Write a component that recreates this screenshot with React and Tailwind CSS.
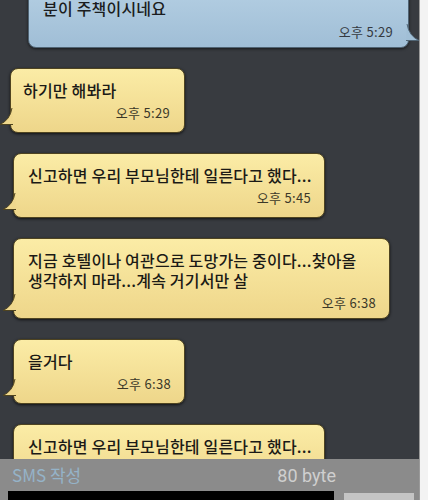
import React from "react";

const FONT = { fontFamily: '"Noto Sans CJK KR", "Noto Sans", sans-serif' };

function Tail({ side = "left", color = "#efd88d", stroke = "#4f4420" }) {
  if (side === "right") {
    return (
      <svg className="absolute -right-[11px] bottom-[5px]" width="13" height="18" viewBox="0 0 13 18">
        <path d="M1 0 Q 3 12 13 16.5 L 0 16.5 Z" fill={color} />
        <path d="M1 0 Q 3 12 13 16.5 L 0 16.5" fill="none" stroke={stroke} strokeWidth="1" />
      </svg>
    );
  }
  return (
    <svg className="absolute -left-[11px] bottom-[6px]" width="13" height="18" viewBox="0 0 13 18">
      <path d="M12 0 Q 10 12 0 16.5 L 13 16.5 Z" fill={color} />
      <path d="M12 0 Q 10 12 0 16.5 L 13 16.5" fill="none" stroke={stroke} strokeWidth="1" />
    </svg>
  );
}

function Bubble({ lines, time, width, left = "ml-[13px]", pl = "pl-[14px]", pr = "pr-[13px]", pb = "pb-[11px]" }) {
  return (
    <div
      className={`relative shrink-0 ${left} rounded-[8px] border border-[#4f4420] bg-gradient-to-b from-[#fbeca6] to-[#eed68a] shadow-[0_1px_3px_rgba(0,0,0,0.7)] pt-[11px] ${pb} ${pl} ${pr}`}
      style={{ width }}
    >
      <div className="text-[16px] leading-[20px] text-[#1b1a16] tracking-[0.2px] font-medium">
        {lines.map((l, i) => (
          <div key={i} className="whitespace-nowrap">{l}</div>
        ))}
      </div>
      <div className="mt-[5px] text-right text-[13px] leading-[16px] tracking-[0.3px] text-[#3b3828]">{time}</div>
      <Tail />
    </div>
  );
}

export default function App() {
  return (
    <div className="flex w-[428px] h-[500px] overflow-hidden bg-[#f3f3f3]" style={FONT}>
      <div className="flex flex-col w-[419px] h-full bg-[#383b40]">
        {/* chat log */}
        <div className="flex-1 min-h-0 overflow-hidden flex flex-col gap-[20px]">
          <div className="relative shrink-0 ml-[28px] w-[381px] -mt-[14px] rounded-[8px] border border-[#506474] bg-gradient-to-b from-[#b4cfe3] to-[#a0bed6] shadow-[0_1px_3px_rgba(0,0,0,0.6)] pt-[11px] pb-[7px] pl-[14px] pr-[15px]">
            <div className="text-[16px] leading-[20px] text-[#1b1d20] tracking-[0.2px] font-medium">분이 주책이시네요</div>
            <div className="mt-[6px] text-right text-[13px] leading-[16px] tracking-[0.3px] text-[#34393f]">오후 5:29</div>
            <Tail side="right" color="#a1bfd6" stroke="#506474" />
          </div>

          <Bubble lines={["하기만 해봐라"]} time="오후 5:29" width={175} left="ml-[10px]" pl="pl-[12px]" pr="pr-[14px]" />
          <Bubble lines={["신고하면 우리 부모님한테 일른다고 했다..."]} time="오후 5:45" width={312} />
          <Bubble
            lines={["지금 호텔이나 여관으로 도망가는 중이다...찾아올", "생각하지 마라...계속 거기서만 살"]}
            time="오후 6:38"
            width={377}
            pb="pb-[7px]"
          />
          <Bubble lines={["을거다"]} time="오후 6:38" width={172} />
          <Bubble lines={["신고하면 우리 부모님한테 일른다고 했다..."]} time="오후 6:38" width={312} />
        </div>

        {/* compose bar */}
        <div className="shrink-0 h-[41px] bg-[#8b8b8b] flex flex-col">
          <div className="h-[32px] w-[336px] flex items-center justify-between pl-[12px]">
            <span className="text-[17px] text-[#95b3c8]">SMS 작성</span>
            <span className="text-[18px] text-[#cfcfcf]" style={{ fontFamily: "Roboto, sans-serif" }}>80 byte</span>
          </div>
          <div className="flex-1 flex pl-[8px]">
            <div className="w-[326px] bg-black" />
            <div className="ml-[10px] mt-[2px] w-[70px] bg-[#c4c4c4]" />
          </div>
        </div>
      </div>
      <div className="w-px h-full bg-[#9a9a9a]" />
    </div>
  );
}
